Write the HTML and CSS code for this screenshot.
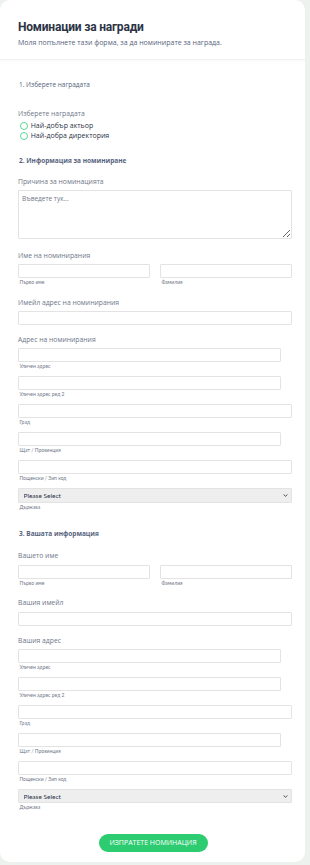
FILE: index.html
```html
<!DOCTYPE html>
<html lang="bg">
<head>
<meta charset="utf-8">
<title>Номинации за награди</title>
<link rel="stylesheet" href="styles.css">
</head>
<body>
<main class="card">
  <header class="header">
    <h1 class="title">Номинации за награди</h1>
    <p class="subtitle">Моля попълнете тази форма, за да номинирате за награда.</p>
  </header>
  <form class="form">
    <div class="step">1. Изберете наградата</div>

    <div class="field field-award">
      <div class="label">Изберете наградата</div>
      <label class="radio"><span class="circle"></span>Най-добър актьор</label>
      <label class="radio"><span class="circle"></span>Най-добра директория</label>
    </div>

    <div class="section">2. Информация за номиниране</div>

    <div class="field field-first">
      <div class="label">Причина за номинацията</div>
      <textarea class="textarea" placeholder="Въведете тук..."></textarea>
    </div>

    <div class="field">
      <div class="label">Име на номинирания</div>
      <div class="name-row">
        <div class="col"><input class="input" type="text"><div class="sub">Първо име</div></div>
        <div class="col"><input class="input" type="text"><div class="sub">Фамилия</div></div>
      </div>
    </div>

    <div class="field">
      <div class="label">Имейл адрес на номинирания</div>
      <input class="input" type="email">
    </div>

    <div class="field field-addr">
      <div class="label">Адрес на номинирания</div>
      <div class="addr">
        <input class="input narrow" type="text"><div class="sub">Уличен адрес</div>
        <input class="input narrow" type="text"><div class="sub">Уличен адрес ред 2</div>
        <input class="input" type="text"><div class="sub">Град</div>
        <input class="input narrow" type="text"><div class="sub">Щат / Провинция</div>
        <input class="input" type="text"><div class="sub">Пощенски / Зип код</div>
        <select class="select"><option>Please Select</option></select><div class="sub">Държава</div>
      </div>
    </div>

    <div class="section section-3">3. Вашата информация</div>

    <div class="field field-first2">
      <div class="label">Вашето име</div>
      <div class="name-row">
        <div class="col"><input class="input" type="text"><div class="sub">Първо име</div></div>
        <div class="col"><input class="input" type="text"><div class="sub">Фамилия</div></div>
      </div>
    </div>

    <div class="field">
      <div class="label">Вашия имейл</div>
      <input class="input" type="email">
    </div>

    <div class="field field-addr">
      <div class="label">Вашия адрес</div>
      <div class="addr">
        <input class="input narrow" type="text"><div class="sub">Уличен адрес</div>
        <input class="input narrow" type="text"><div class="sub">Уличен адрес ред 2</div>
        <input class="input" type="text"><div class="sub">Град</div>
        <input class="input narrow" type="text"><div class="sub">Щат / Провинция</div>
        <input class="input" type="text"><div class="sub">Пощенски / Зип код</div>
        <select class="select"><option>Please Select</option></select><div class="sub">Държава</div>
      </div>
    </div>

    <div class="actions">
      <button class="submit" type="button">Изпратете номинация</button>
    </div>
  </form>
</main>
</body>
</html>
```

FILE: styles.css
```css
* { box-sizing: border-box; }
html, body { margin: 0; padding: 0; }
body {
  background: #eef2ee;
  font-family: "Open Sans", "Noto Sans", sans-serif;
  color: #2c3345;
  width: 310px;
  height: 865px;
  overflow: hidden;
}
.card {
  width: 305px;
  height: 862px;
  background: #ffffff;
  border-radius: 10px;
}
.header {
  height: 60px;
  padding: 19px 18px 0;
  border-bottom: 1px solid #f1f3f1;
  box-shadow: 0 1px 2px rgba(0,0,0,0.03);
}
.title {
  margin: 0;
  font-family: "Roboto", "Open Sans", sans-serif;
  font-size: 12px;
  line-height: 16px;
  font-weight: 700;
  letter-spacing: -0.2px;
  color: #2c3345;
}
.subtitle {
  margin: 3px 0 0;
  font-size: 7px;
  line-height: 10px;
  color: #57647e;
}
.form {
  padding: 0 13px 0 18px;
  display: flex;
  flex-direction: column;
}
.step {
  margin-top: 20.3px;
  padding-left: 1px;
  font-size: 6.5px;
  line-height: 10px;
  height: 10px;
  color: #57647e;
}
.field { margin-top: 11.7px; display: flex; flex-direction: column; }
.field-award { margin-top: 19px; }
.field-first { margin-top: 10.7px; }
.field-addr { margin-top: 9.9px; }
.field-first2 { margin-top: 12px; }
.label {
  font-size: 6.8px;
  line-height: 10px;
  height: 10px;
  color: #6f7889;
  margin-bottom: 3.3px;
}
.field-award .label { margin-bottom: 1.7px; }
.radio {
  display: flex;
  align-items: center;
  height: 10px;
  flex: none;
  font-size: 7px;
  line-height: 10px;
  color: #2c3345;
  padding-left: 1.7px;
}
.circle {
  width: 8px;
  height: 8px;
  border: 1px solid #5fd596;
  border-radius: 50%;
  margin-right: 3px;
  flex: none;
}
.section {
  margin-top: 15px;
  padding-left: 1px;
  font-size: 6.5px;
  line-height: 10px;
  height: 10px;
  font-weight: 700;
  color: #57647e;
}
.section-3 { margin-top: 18.5px; }
.textarea {
  display: block;
  width: 274px;
  height: 49.3px;
  border: 1px solid #e3e3e3;
  border-radius: 1px;
  padding: 3px 3px;
  margin: 0;
  font-family: "Open Sans", "Noto Sans", sans-serif;
  font-size: 6.5px;
  color: #2c3345;
  resize: vertical;
}
.textarea::placeholder { color: #6f7889; }
.input {
  display: block;
  width: 274px;
  height: 14px;
  margin: 0;
  border: 1px solid #e3e3e3;
  border-radius: 1px;
  background: #fff;
  padding: 0 3px;
}
.input.narrow { width: 263px; }
.name-row {
  display: grid;
  grid-template-columns: 132px 132px;
  column-gap: 10px;
}
.name-row .input { width: 100%; }
.sub {
  font-family: "Lato", "Open Sans", sans-serif;
  font-size: 5px;
  line-height: 8px;
  height: 8px;
  color: #6f7889;
  padding-left: 1.5px;
}
.addr { display: flex; flex-direction: column; }
.addr .sub { margin-bottom: 6px; }
.addr .sub:last-child { margin-bottom: 0; }
.select {
  display: block;
  width: 274px;
  height: 14.5px;
  margin: 0;
  border: 1px solid #e3e3e3;
  border-radius: 1px;
  -webkit-appearance: none;
  appearance: none;
  background-color: #eeeeee;
  background-image: url("data:image/svg+xml,%3Csvg xmlns='http://www.w3.org/2000/svg' width='6' height='4' viewBox='0 0 6 4'%3E%3Cpath d='M0.7 0.7 L3 3 L5.3 0.7' fill='none' stroke='%232c3345' stroke-width='1.1'/%3E%3C/svg%3E");
  background-repeat: no-repeat;
  background-position: right 4px center;
  background-size: 4.5px 3px;
  font-family: "Lato", "Open Sans", sans-serif;
  font-size: 6.5px;
  font-weight: 400;
  color: #2c3345;
  padding: 0 4.5px;
}
.actions {
  display: flex;
  justify-content: center;
  margin-top: 22.5px;
  padding-right: 4px;
}
.submit {
  width: 109px;
  height: 18px;
  border: 0;
  border-radius: 9px;
  background: #2ecc71;
  color: #ffffff;
  font-family: "Open Sans", "Noto Sans", sans-serif;
  font-size: 7px;
  text-transform: uppercase;
  padding: 0;
  cursor: pointer;
}
```
